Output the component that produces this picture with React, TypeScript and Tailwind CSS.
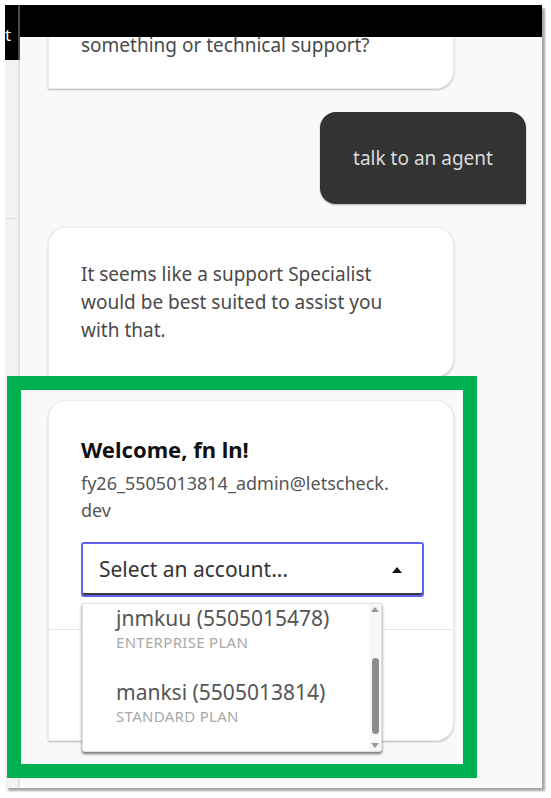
import React from "react";

const font = { fontFamily: '"Noto Sans", "Open Sans", sans-serif' };

function BotBubble({ children, className = "" }: { children: React.ReactNode; className?: string }) {
  return (
    <div
      className={`w-[406px] shrink-0 rounded-[18px] rounded-bl-none border border-[#ececec] bg-white shadow-[0_1px_2px_rgba(0,0,0,0.25)] ${className}`}
    >
      {children}
    </div>
  );
}

function Caret() {
  return (
    <svg width="10" height="6" viewBox="0 0 10 6" className="shrink-0">
      <path d="M0 6 L5 0 L10 6 Z" fill="#111" />
    </svg>
  );
}

function AccountList() {
  const accounts = [
    { name: "jnmkuu (5505015478)", plan: "ENTERPRISE PLAN" },
    { name: "manksi (5505013814)", plan: "STANDARD PLAN" },
  ];
  return (
    <div className="absolute left-[1px] top-[calc(100%+6px)] z-10 flex h-[149px] w-[300px] overflow-hidden rounded-b-[3px] border border-[#e2e2e2] bg-white shadow-[0_2px_3px_rgba(0,0,0,0.55)]">
      <div className="-mt-[12px] flex flex-1 flex-col">
        {accounts.map((a) => (
          <div key={a.name} className="flex flex-col pl-[33px] pb-[14px] pt-[12px]">
            <span className="text-[21px] leading-[28px] text-[#555]">{a.name}</span>
            <span className="text-[15px] leading-[20px] tracking-[0.3px] text-[#a9a9a9]">{a.plan}</span>
          </div>
        ))}
      </div>
      <div className="flex w-[12px] flex-col items-center bg-[#f8f8f8] pt-[3px] pb-[3px]">
        <svg width="8" height="5" viewBox="0 0 8 5">
          <path d="M0 5 L4 0 L8 5 Z" fill="#9a9a9a" />
        </svg>
        <div className="mt-[46px] h-[76px] w-[7px] rounded-full bg-[#8c8c8c]" />
        <div className="flex-1" />
        <svg width="8" height="5" viewBox="0 0 8 5">
          <path d="M0 0 L4 5 L8 0 Z" fill="#9a9a9a" />
        </svg>
      </div>
    </div>
  );
}

export default function App() {
  return (
    <div className="relative h-[798px] w-[551px] bg-white pl-[5px] pt-[5px]" style={font}>
      <div className="flex h-[783px] w-[537px] overflow-hidden shadow-[3px_3px_2px_rgba(0,0,0,0.35)]">
        {/* left strip */}
        <div className="flex w-[15px] flex-col">
          <div className="flex h-[55px] items-start overflow-hidden border-r-2 border-[#4a4a4a] bg-black pt-[20px]">
            <span className="text-[17px] leading-[20px] text-white">t</span>
          </div>
          <div className="flex flex-1 flex-col border-r-2 border-[#e2e2e2] bg-[#f2f2f2]">
            <div className="h-[159px] border-b border-[#dedede]" />
          </div>
        </div>

        {/* chat */}
        <div className="flex flex-1 flex-col">
          <div className="relative z-10 h-[32px] shrink-0 bg-black" />
          <div className="flex flex-1 flex-col gap-[23px] overflow-hidden rounded-bl-lg bg-[#f9f9f9] pl-[28px] pr-[16px]">
            <BotBubble className="-mt-[39px] px-8 pb-[29px] pt-8">
              <p className="text-[19px] leading-[28px] text-[#4a4a4a]">something or technical support?</p>
            </BotBubble>

            <div className="flex h-[92px] w-[206px] shrink-0 items-center justify-center self-end rounded-2xl rounded-br-none bg-[#333333] shadow-[0_1px_2px_rgba(0,0,0,0.3)]">
              <span className="text-[19px] leading-[28px] text-[#dcdcdc]">talk to an agent</span>
            </div>

            <BotBubble className="px-8 py-8">
              <p className="text-[19px] leading-[28px] text-[#4a4a4a]">
                It seems like a support Specialist would be best suited to assist you with that.
              </p>
            </BotBubble>

            <BotBubble className="flex flex-col">
              <div className="flex flex-col px-8 pt-[34px] pb-[32px]">
                <h2 className="text-[22px] font-bold leading-[28px] text-[#111]">Welcome, fn ln!</h2>
                <p className="mt-[7px] text-[18px] leading-[27px] text-[#555]">
                  fy26_5505013814_admin@letscheck.
                  <br />
                  dev
                </p>
                <div className="relative mt-[18px]">
                  <div className="flex h-[55px] w-[343px] items-center justify-between rounded-[3px] border-2 border-[#6262f2] bg-white pl-[16px] pr-[20px] shadow-[inset_0_-2px_0_#3a3a3a]">
                    <span className="text-[21px] text-[#333]">Select an account...</span>
                    <Caret />
                  </div>
                  <AccountList />
                </div>
              </div>
              <div className="h-[111px] border-t border-[#e6e6e6]" />
            </BotBubble>
          </div>
        </div>
      </div>

      {/* annotation frame */}
      <div className="pointer-events-none absolute left-[7px] top-[376px] h-[402px] w-[470px] border-[14px] border-[#00b050]" />
    </div>
  );
}
